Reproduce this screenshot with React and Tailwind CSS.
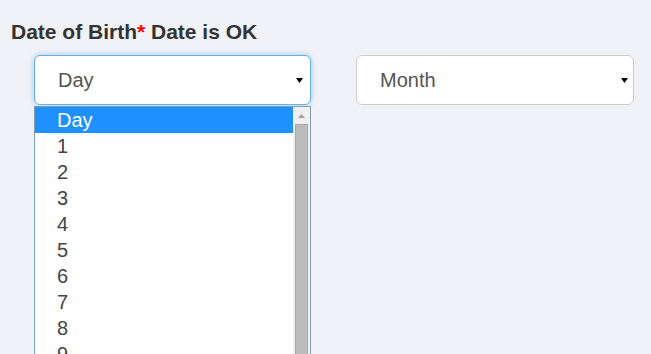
import React from "react";

const days = ["1", "2", "3", "4", "5", "6", "7", "8", "9"];

const Caret = () => (
  <svg width="7" height="5" viewBox="0 0 7 5" className="shrink-0">
    <path d="M0 0h7L3.5 5z" fill="#000" />
  </svg>
);

const App = () => {
  return (
    <div
      className="w-[651px] h-[354px] overflow-hidden bg-[#f1f2f7] text-[#333]"
      style={{ fontFamily: '"Liberation Sans", Arial, sans-serif' }}
    >
      {/* Label */}
      <div className="pl-[11px] pt-[20px] text-[21px] font-bold leading-[24px]">
        Date of Birth<span className="text-[#f00]">*</span> Date is OK
      </div>

      {/* Selects row */}
      <div className="flex gap-[45px] pl-[34px] pt-[11px]">
        <div className="w-[277px]">
          <div className="h-[50px] flex items-center justify-between pl-[23px] pr-[7px] bg-white border border-[#66afe9] rounded-[6px] shadow-[0_0_6px_rgba(102,175,233,0.6)] text-[20px] text-[#555]">
            <span>Day</span>
            <Caret />
          </div>

          {/* Open list */}
          <div className="mt-px flex bg-white border border-[#7f9db9] border-b-0 h-[260px]">
            <div className="flex-1">
              <div className="h-[26px] flex items-center pl-[22px] bg-[#1e90ff] text-white text-[20px]">
                Day
              </div>
              {days.map((d) => (
                <div
                  key={d}
                  className="h-[26px] flex items-center pl-[22px] text-[20px] text-[#444]"
                >
                  {d}
                </div>
              ))}
            </div>
            <div className="w-[17px] bg-[#f0f0f0] flex flex-col items-center">
              <div className="h-[17px] flex items-center justify-center">
                <svg width="7" height="4" viewBox="0 0 7 4">
                  <path d="M0 4h7L3.5 0z" fill="#a3a3a3" />
                </svg>
              </div>
              <div className="w-[13px] flex-1 bg-[#bcbcbc] border border-[#a8a8a8]" />
            </div>
          </div>
        </div>

        <div className="w-[278px] self-start h-[50px] flex items-center justify-between pl-[23px] pr-[5px] bg-white border border-[#ccc] rounded-[6px] text-[20px] text-[#555]">
          <span>Month</span>
          <Caret />
        </div>
      </div>
    </div>
  );
};

export default App;
